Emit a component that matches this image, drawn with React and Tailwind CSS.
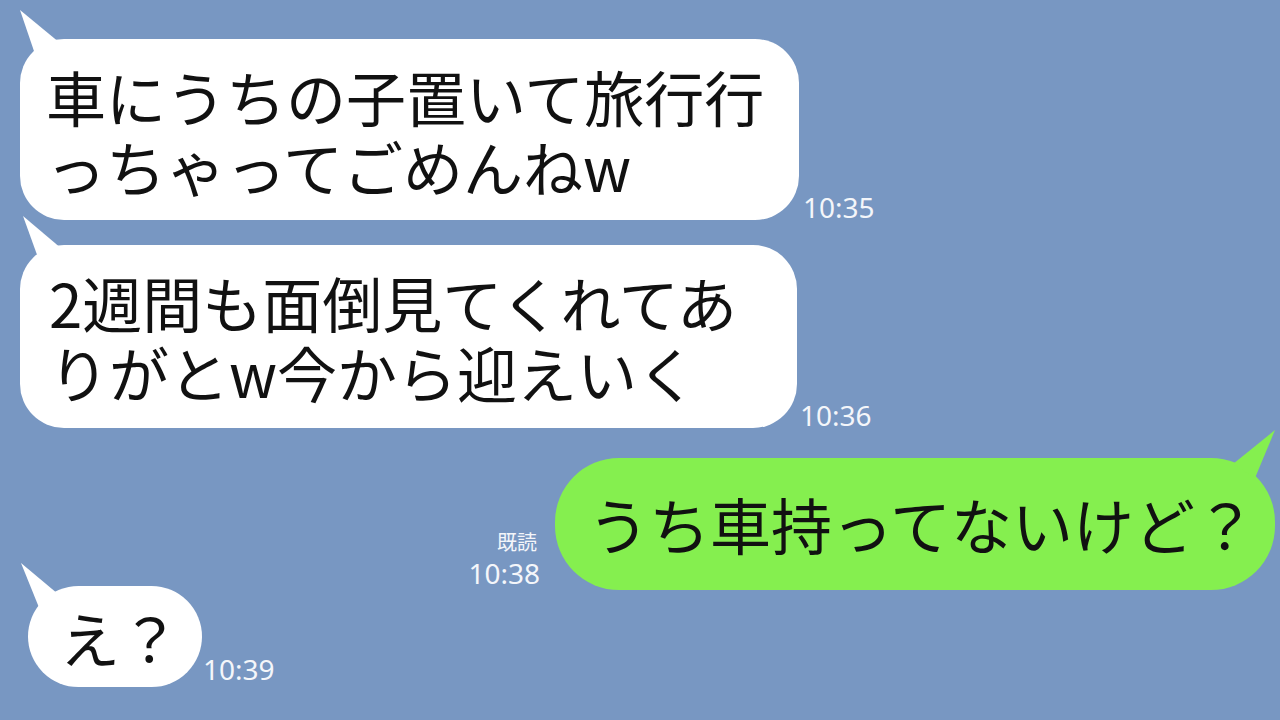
// App.jsx
import React from 'react';

const Tail = ({ points, color }) => (
    <svg
        className="absolute left-0 top-0 overflow-visible"
        width="1"
        height="1"
    >
        <polygon points={points} fill={color} />
    </svg>
);

const Time = ({ children, className = '' }) => (
    <span
        className={`font-['Noto_Sans',sans-serif] text-[28px] leading-none text-[#f4f6fa] ${className}`}
    >
        {children}
    </span>
);

const App = () => {
    return (
        <div className="w-full h-[720px] overflow-hidden bg-[#7897c2] flex flex-col font-['Noto_Sans_CJK_JP',sans-serif] text-[#111]">
            {/* 1 */}
            <div className="flex items-end mt-[39px] ml-[20px]">
                <div className="relative bg-white rounded-[44px] w-[779px] pl-[26px] pt-[22px] pb-[19px] text-[60px] leading-[70px] whitespace-nowrap">
                    <Tail points="0,-29 40,4 16,18" color="#ffffff" />
                    <span className="relative">
                        車にうちの子置いて旅行行
                        <br />
                        っちゃってごめんねw
                    </span>
                </div>
                <Time className="ml-[4px] mb-[-1px]">10:35</Time>
            </div>

            {/* 2 */}
            <div className="flex items-end mt-[25px] ml-[20px]">
                <div className="relative bg-white rounded-[44px] w-[777px] pl-[29px] pt-[22px] pb-[21px] text-[60px] leading-[70px] whitespace-nowrap">
                    <Tail points="3,-29 42,4 20,18" color="#ffffff" />
                    <span className="relative">
                        2週間も面倒見てくれてあ
                        <br />
                        りがとw今から迎えいく
                    </span>
                </div>
                <Time className="ml-[3px] mb-[-1px]">10:36</Time>
            </div>

            {/* 3 */}
            <div className="flex items-end justify-end mt-[30px] pr-[5px]">
                <div className="flex flex-col items-end mr-[15px] mb-[3px]">
                    <span className="text-[20px] leading-[24px] text-[#f4f6fa] mr-[3px]">既読</span>
                    <Time className="mt-[5px]">10:38</Time>
                </div>
                <div className="relative bg-[#85ef4f] rounded-[64px] w-[720px] h-[132px] flex items-center pl-[33px] text-[61px] leading-[70px] whitespace-nowrap">
                    <Tail points="720,-28 678,6 700,20" color="#85ef4f" />
                    <span className="relative">うち車持ってないけど？</span>
                </div>
            </div>

            {/* 4 */}
            <div className="flex items-end -mt-[4px] ml-[28px]">
                <div className="relative bg-white rounded-[52px] w-[174px] h-[101px] flex items-center pl-[32px] text-[60px] leading-[70px] whitespace-nowrap">
                    <Tail points="-7,-23 30,8 12,24" color="#ffffff" />
                    <span className="relative">え？</span>
                </div>
                <Time className="ml-[1px] mb-[4px]">10:39</Time>
            </div>
        </div>
    );
};

export default App;
